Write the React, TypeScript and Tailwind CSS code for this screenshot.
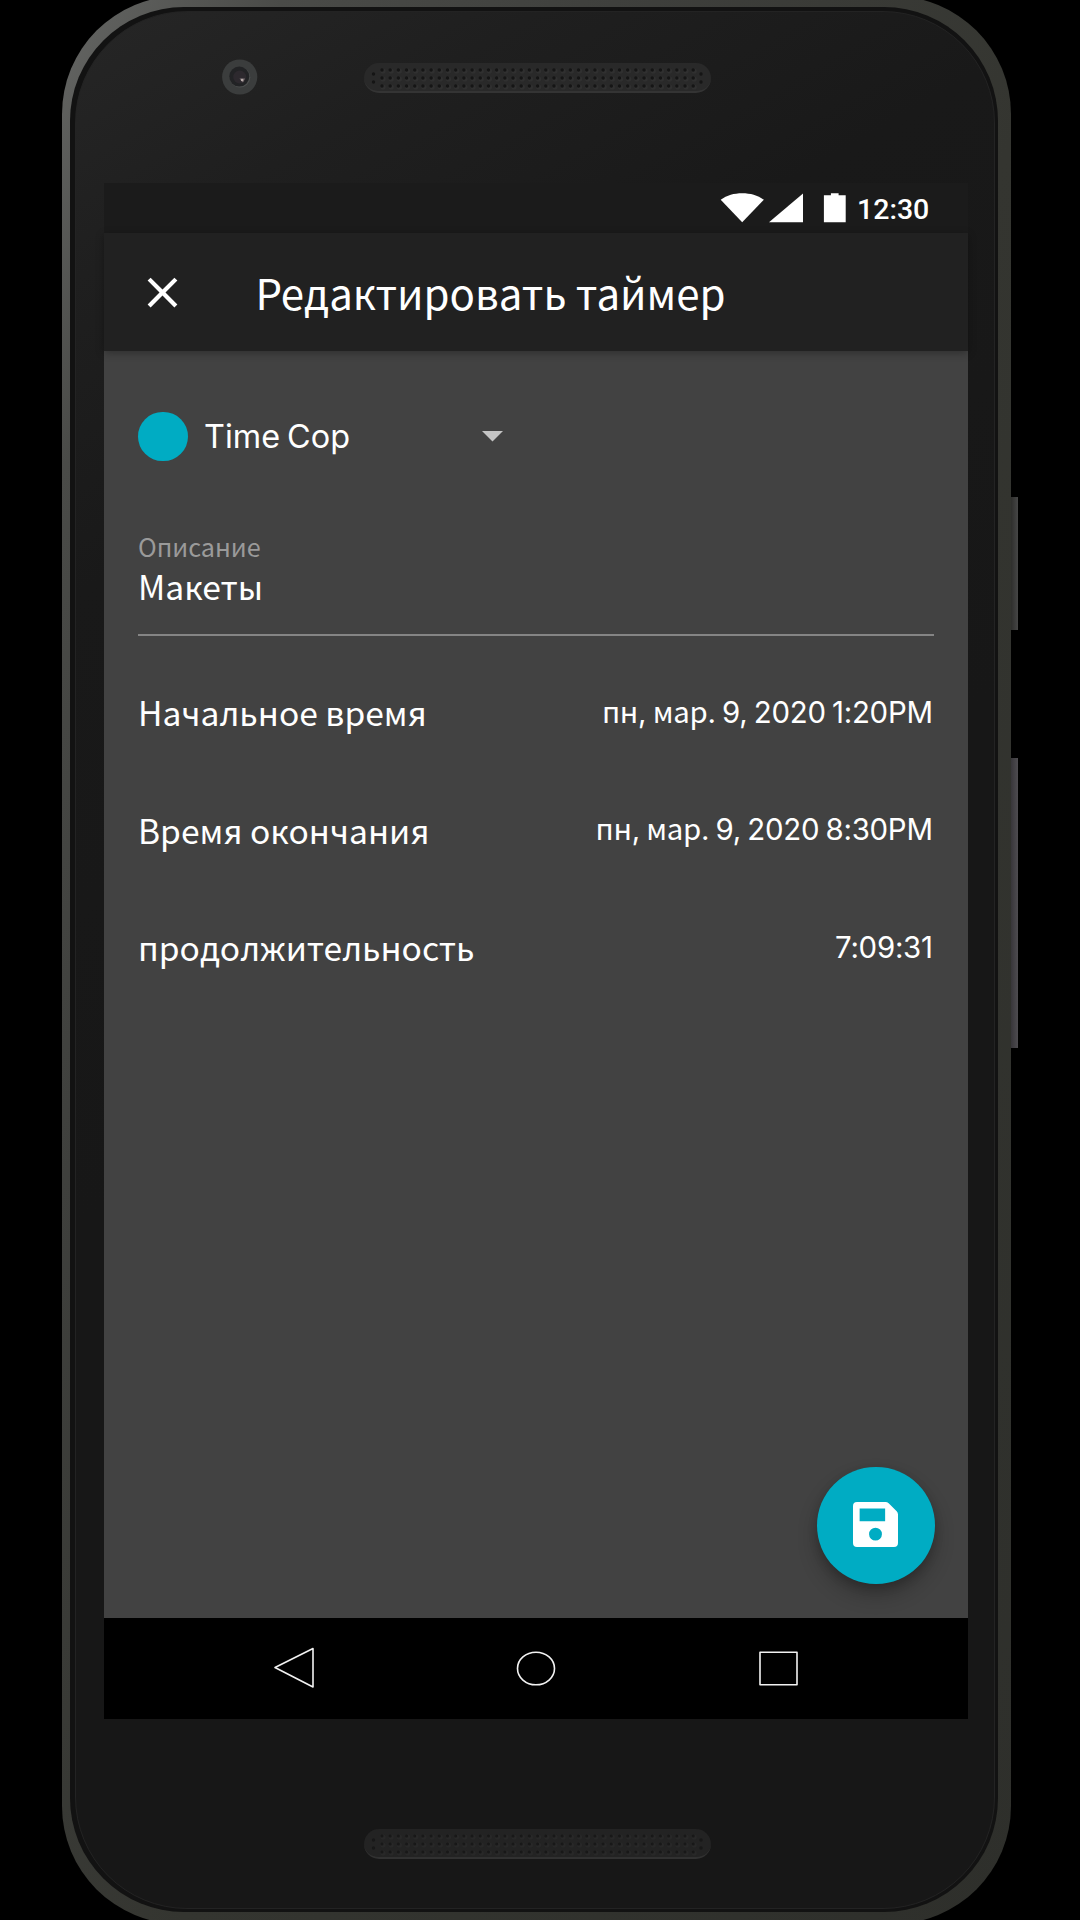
import React from 'react';

const CYR = "font-['Noto_Sans_CJK_SC','Noto_Sans',sans-serif]";

function Speaker({ dim = false }: { dim?: boolean }) {
  const columns = Array.from({ length: 39 }, (_, i) => 18 + i * 8.19);
  const hole = dim ? '#181818' : '#151515';
  return (
    <div
      className={
        dim
          ? 'h-[30px] w-[347px] rounded-full border-b-2 border-[#313131] bg-[#232323]'
          : 'h-[30px] w-[347px] rounded-full border-b-2 border-[#343434] bg-[#292929]'
      }
    >
      <svg width="347" height="30" viewBox="0 0 347 30">
        {columns.map((x) =>
          [7, 15, 23].map((y) => (
            <g key={x + '-' + y}>
              <circle cx={x + 1} cy={y + 1} r="2.6" fill={dim ? '#282828' : '#303030'} />
              <circle cx={x} cy={y} r={dim ? 1.5 : 1.7} fill={hole} />
            </g>
          )),
        )}
        {[9.5, 337].map((x) => [11, 19].map((y) => <circle key={x + '-' + y} cx={x} cy={y} r="1.7" fill={hole} />))}
      </svg>
    </div>
  );
}

function Camera() {
  return (
    <svg width="36" height="36" viewBox="0 0 36 36">
      <circle cx="17.700" cy="18" r="17.6" fill="#3b3d3d" />
      <circle cx="18" cy="18.3" r="10.3" fill="#4d4f4f" />
      <circle cx="17.3" cy="17.6" r="10" fill="#222325" />
      <circle cx="17.700" cy="18" r="6.500" fill="#2d292e" />
      <path d="M17.500 19.500h5.500l-2 4z" fill="#7d7274" />
      <circle cx="20" cy="21" r="1.200" fill="#b9adab" />
    </svg>
  );
}

function StatusBar() {
  return (
    <div className="flex h-[50px] items-center bg-[#1b1b1b] pl-[616px]">
      <svg width="130" height="30" viewBox="0 0 130 30" fill="#fff" className="shrink-0">
        <path d="M.7 6.8C7 2.300 14 .3 22.200 .3S37.500 2.300 43.800 6.800L22.200 29.300z" />
        <path d="M83 .5V29.300H49z" />
        <path d="M103.900 2.300h7V.3h7.700v2h7.100v27h-21.800z" />
      </svg>
      <span className="ml-[7px] mt-[4px] font-['Roboto',sans-serif] text-[28.5px] font-medium leading-[46px] text-white">
        12:30
      </span>
    </div>
  );
}

function AppBar() {
  return (
    <div className="relative z-10 flex h-[118px] items-center bg-[#212121] pl-[33px] shadow-[0_2px_8px_rgba(0,0,0,0.3)]">
      <svg width="51" height="51" viewBox="0 0 24 24" fill="#fff" className="shrink-0">
        <path d="M19 6.410 17.590 5 12 10.590 6.410 5 5 6.410 10.590 12 5 17.590 6.410 19 12 13.410 17.590 19 19 17.590 13.410 12z" />
      </svg>
      <h1 className={`${CYR} ml-[67.400px] whitespace-nowrap text-[42px] leading-[60px] text-white`}>Редактировать таймер</h1>
    </div>
  );
}

function DateValue({ rest }: { rest: string }) {
  return (
    <span className="whitespace-nowrap font-['Inter','Noto_Sans_CJK_SC',sans-serif] text-[29.4px] tracking-[-0.25px] text-white [word-spacing:-1.700px]">
      <span className={CYR}>пн</span>, <span className={CYR}>мар</span>
      {rest}
    </span>
  );
}

function Row({ label, children }: { label: string; children: React.ReactNode }) {
  return (
    <div className="flex h-[117.500px] items-baseline justify-between">
      <span className={`${CYR} whitespace-nowrap text-[33.600px] leading-[50px] text-white`}>{label}</span>
      <span className="relative -top-[3.500px] pr-[1.300px] leading-[50px]">{children}</span>
    </div>
  );
}

function FormBody() {
  return (
    <div className="relative h-[1267px] bg-[#424242] px-[34px] pt-[60px]">
      <div className="flex h-[51px] items-center">
        <div className="size-[49.500px] rounded-full bg-[#00acc3]" />
        <span className="ml-[16.500px] mt-[2px] w-[260px] font-['Inter',sans-serif] text-[32.400px] text-white [word-spacing:-2px]">
          Time Cop
        </span>
        <svg width="21" height="11" viewBox="0 0 21 11" className="ml-[17.500px]">
          <path d="M0 0h21L10.500 10.500z" fill="#c4c4c4" />
        </svg>
      </div>
      <div className={`${CYR} flex h-[174px] flex-col border-b-2 border-[#858585] pt-[65px]`}>
        <span className="text-[25.200px] leading-[38px] text-[#9a9a9a]">Описание</span>
        <span className="text-[33.600px] leading-[41px] text-white">Макеты</span>
      </div>
      <div className="pt-[51px]">
        <Row label="Начальное время">
          <DateValue rest=". 9, 2020 1:20PM" />
        </Row>
        <Row label="Время окончания">
          <DateValue rest=". 9, 2020 8:30PM" />
        </Row>
        <Row label="продолжительность">
          <span className="font-['Inter',sans-serif] text-[29.400px] tracking-[-0.25px] text-white">7:09:31</span>
        </Row>
      </div>
      <button className="absolute bottom-[34px] right-[33.500px] flex size-[117.500px] items-center justify-center rounded-full bg-[#00acc3] shadow-[0_11px_20px_rgba(0,0,0,0.24),0_4px_10px_rgba(0,0,0,0.16)]">
        <svg width="45" height="45" viewBox="0 0 448 448" fill="#fff" className="-mt-[2px]">
          <path
            fillRule="evenodd"
            d="M40 0H323Q342 0 355 13L435 93Q448 106 448 125V408Q448 448 408 448H40Q0 448 0 408V40Q0 0 40 0ZM66 64V192H320V64ZM224 256a64 64 0 1 0 0 128a64 64 0 1 0 0-128Z"
          />
        </svg>
      </button>
    </div>
  );
}

function NavBar() {
  return (
    <div className="flex h-[101px] items-center bg-black pb-[2px] pl-[169px]">
      <svg width="530" height="42" viewBox="0 0 530 42" fill="none" stroke="#f2f2f2" strokeWidth="1.6" strokeLinejoin="round">
        <path d="M2 20.500 40 1.500V40z" />
        <ellipse cx="263" cy="21.500" rx="18.500" ry="16.300" />
        <rect x="487" y="5.300" width="37" height="32.400" />
      </svg>
    </div>
  );
}

export default function App() {
  return (
    <div className="flex h-[1920px] w-[1080px] items-start overflow-hidden bg-black pl-[62px]">
      <div className="-mt-[4px] h-[1928px] w-[949px] shrink-0 rounded-[118px] bg-[linear-gradient(115deg,#656664_0%,#4a4b48_12%,#3f403d_30%,#343530_55%,#2e2f2b_100%)] pb-[12px] pl-[8px] pr-[13px] pt-[11px]">
        <div className="h-full w-full rounded-[114px] bg-[#121212] pb-[3px] pl-[5px] pr-[3px] pt-[4px]">
          <div className="flex h-full w-full flex-col rounded-[112px] border border-[#232323] bg-[linear-gradient(150deg,#262626_0%,#1f1f1f_11%,#191919_24%,#171717_50%)] pl-[28px]">
            <div className="flex h-[171px] items-start pl-[118px] pt-[47px]">
              <Camera />
              <div className="ml-[106px] mt-[3.500px]">
                <Speaker />
              </div>
            </div>
            <div className="h-[1536px] w-[864px] shrink-0">
              <StatusBar />
              <AppBar />
              <FormBody />
              <NavBar />
            </div>
            <div className="pl-[260px] pt-[110px]">
              <Speaker dim />
            </div>
          </div>
        </div>
      </div>
      <div className="flex w-[7px] flex-col pt-[497px]">
        <div className="h-[133px] bg-[linear-gradient(90deg,#2e2e2c,#464646)]" />
        <div className="mt-[128px] h-[290px] bg-[linear-gradient(90deg,#38363a,#4e4c50)]" />
      </div>
    </div>
  );
}
